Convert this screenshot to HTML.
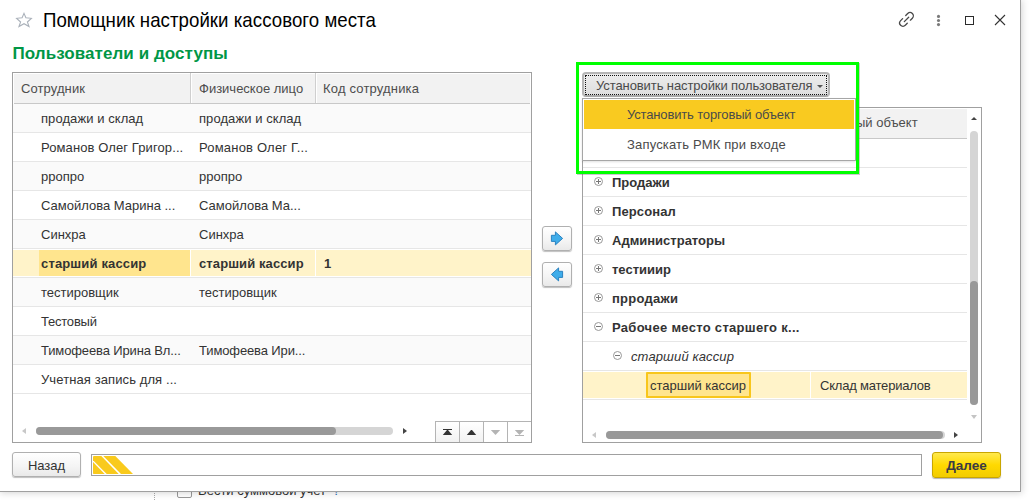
<!DOCTYPE html>
<html lang="ru">
<head>
<meta charset="utf-8">
<title>Помощник настройки кассового места</title>
<style>
*{box-sizing:border-box;margin:0;padding:0}
html,body{width:1032px;height:500px;overflow:hidden;background:#fff}
body{font-family:"Liberation Sans",sans-serif;font-size:13px;color:#333;position:relative}
.abs{position:absolute}
#under{left:0;top:480px;width:1032px;height:20px;background:#fff;overflow:hidden}
#under .dots{left:154px;top:0;width:0;height:20px;border-left:1px dotted #aaa}
#under .cb{left:177px;top:3px;width:15px;height:15px;border:1px solid #999;border-radius:2px;background:#fff}
#under .t{left:198px;top:3px;font-size:13px;line-height:15px;color:#333;white-space:nowrap}
#under .t span{color:#2a6fb5}
#win{left:-1px;top:-1px;width:1022px;height:493px;background:#fff;border:1px solid #a0a0a0;box-shadow:1px 1px 7px rgba(0,0,0,.17)}
#title{left:43px;top:9px;font-size:18.67px;line-height:22px;transform:scaleY(1.06);transform-origin:0 4px;letter-spacing:0.045px;color:#000;white-space:nowrap}
#heading{left:12.500px;top:44px;font-size:17px;line-height:20px;font-weight:bold;color:#009646;white-space:nowrap;letter-spacing:0.070px}
/* left table */
#lt{left:12px;top:72px;width:520px;height:371px;border:1px solid #a0a0a0;background:#fff;overflow:hidden}
#lt .hdr{left:1px;top:1px;width:516px;height:30px;background:#f2f2f2;border-bottom:1px solid #c8c8c8}
#lt .hdr div{position:absolute;top:0;height:30px;line-height:30px;color:#4d4d4d;white-space:nowrap}
.vsep{position:absolute;top:-1px;width:1px;height:30px;background:#cfcfcf}
.row{position:absolute;left:0;width:518px;height:29px;border-bottom:1px solid #e6e6e6;line-height:30px;white-space:nowrap}
.row.alt{background:#fafafa}
.row div{position:absolute;top:0;height:28px}
.c1{left:28px}.c2{left:186px}.c3{left:311px}
.row.sel{background:#fff;font-weight:bold;color:#333}
/* right tree */
#rt{left:582px;top:107px;width:400px;height:336px;border:1px solid #a0a0a0;background:#fff;overflow:hidden}
#rt .hdr{left:1px;top:1px;width:383px;height:30px;background:#f2f2f2;border-bottom:1px solid #c8c8c8}
.trow{position:absolute;left:0;width:384px;height:29px;border-bottom:1px solid #e6e6e6;line-height:30px;white-space:nowrap}
.trow b,.trow i{position:absolute;top:0}
.ic{position:absolute;width:9px;height:9px;border:1px solid #999;border-radius:50%;top:9px}
.ic:before{content:"";position:absolute;left:1px;top:3px;width:5px;height:1px;background:#777}
.ic.p:after{content:"";position:absolute;left:3px;top:1px;width:1px;height:5px;background:#777}
.btn{position:absolute;border:1px solid #b0b0b0;border-radius:3px;background:linear-gradient(#fff,#f4f4f4 60%,#e9e9e9);box-shadow:0 1px 1px rgba(0,0,0,.25)}
</style>
</head>
<body>
<div id="under" class="abs">
  <div class="abs dots"></div>
  <div class="abs cb"></div>
  <div class="abs t">Вести суммовой учет <span style="margin-left:3px">?</span></div>
</div>
<div id="win" class="abs">
  <!-- title bar -->
  <svg class="abs" style="left:14px;top:11px" width="20" height="18" viewBox="0 0 20 18"><path d="M10.0 2.4 L11.9 6.7 L17.4 7.3 L13.4 11.0 L15.0 15.6 L10.0 12.7 L5.0 15.6 L6.6 11.0 L2.6 7.3 L8.1 6.7 Z" fill="none" stroke="#aab1ba" stroke-width="1.100" stroke-linejoin="miter"/></svg>
  <div id="title" class="abs">Помощник настройки кассового места</div>
  <svg class="abs" style="left:896px;top:9px" width="21" height="21" viewBox="-10.500 -10.400 21 21" fill="none" stroke="#484848" stroke-width="1.300" stroke-linecap="round"><g transform="rotate(-45)"><path d="M-2.200 -3.300 H-5 A3.300 3.300 0 0 0 -5 3.300 H-2.200"/><path d="M2.200 -3.300 H5 A3.300 3.300 0 0 1 5 3.300 H2.200"/><path d="M-3.100 0 H3.100"/></g></svg>
  <svg class="abs" style="left:936px;top:14px" width="5" height="13" viewBox="0 0 5 13" fill="#7a7a7a"><circle cx="2.500" cy="2.400" r="1.550"/><circle cx="2.500" cy="6.500" r="1.550"/><circle cx="2.500" cy="10.600" r="1.550"/></svg>
  <div class="abs" style="left:965px;top:16px;width:9px;height:9px;border:1.200px solid #2b2b2b"></div>
  <svg class="abs" style="left:994px;top:14px" width="12" height="12" viewBox="0 0 12 12" stroke="#333" stroke-width="1.100" fill="none"><path d="M1 1 L11 11 M11 1 L1 11"/></svg>

  <div id="heading" class="abs">Пользователи и доступы</div>

  <!-- left table -->
  <div id="lt" class="abs">
    <div class="abs hdr">
      <div style="left:7px;letter-spacing:0.1px">Сотрудник</div>
      <div style="left:185px">Физическое лицо</div>
      <div style="left:309px;letter-spacing:0.18px">Код сотрудника</div>
      <span class="vsep" style="left:176px"></span><span class="vsep" style="left:177px;background:#fff"></span>
      <span class="vsep" style="left:301px"></span><span class="vsep" style="left:302px;background:#fff"></span>
    </div>
    <div class="row alt" style="top:31px"><div class="c1" style="letter-spacing:.07px">продажи и склад</div><div class="c2" style="letter-spacing:.07px">продажи и склад</div></div>
    <div class="row" style="top:60px"><div class="c1" style="letter-spacing:.1px">Романов Олег Григор...</div><div class="c2" style="letter-spacing:.19px">Романов Олег Г...</div></div>
    <div class="row alt" style="top:89px"><div class="c1">рропро</div><div class="c2">рропро</div></div>
    <div class="row" style="top:118px"><div class="c1">Самойлова Марина ...</div><div class="c2">Самойлова Ма...</div></div>
    <div class="row alt" style="top:147px"><div class="c1">Синхра</div><div class="c2">Синхра</div></div>
    <div class="row sel" style="top:176px">
      <span class="abs" style="left:0;top:1px;width:518px;height:26px;background:#fff3c9"></span>
      <span class="abs" style="left:26px;top:1px;width:151px;height:26px;background:#ffe58e"></span>
      <span class="abs" style="left:177px;top:1px;width:1px;height:26px;background:#fff"></span>
      <span class="abs" style="left:302px;top:1px;width:1px;height:26px;background:#fff"></span>
      <div class="c1" style="letter-spacing:.15px">старший кассир</div><div class="c2" style="letter-spacing:.1px">старший кассир</div><div class="c3">1</div></div>
    <div class="row alt" style="top:205px"><div class="c1">тестировщик</div><div class="c2">тестировщик</div></div>
    <div class="row" style="top:234px"><div class="c1" style="letter-spacing:-.22px">Тестовый</div></div>
    <div class="row alt" style="top:263px"><div class="c1" style="letter-spacing:-.13px">Тимофеева Ирина Вл...</div><div class="c2" style="letter-spacing:-.12px">Тимофеева Ири...</div></div>
    <div class="row" style="top:292px"><div class="c1" style="letter-spacing:.1px">Учетная запись для ...</div></div>
    <!-- h scrollbar -->
    <div class="abs" style="left:23px;top:354px;width:357px;height:8px;border-radius:4px;background:#d5d5d5"></div>
    <div class="abs" style="left:23px;top:354px;width:300px;height:8px;border-radius:4px;background:#999"></div>
    <div class="abs" style="left:9px;top:355px;border:3px solid transparent;border-right:4px solid #c8c8c8;border-left:0"></div>
    <div class="abs" style="left:390px;top:355px;border:3px solid transparent;border-left:4px solid #444;border-right:0"></div>
    <!-- nav buttons -->
    <div class="abs" style="left:422px;top:348px;width:97px;height:22px;border-top:1px solid #b4b4b4;border-left:1px solid #b4b4b4;background:#fff">
      <span class="abs" style="left:0;top:0;width:47px;height:21px;background:linear-gradient(#fff,#f1f1f1)"></span>
      <span class="abs" style="left:23px;top:0;width:1px;height:21px;background:#b4b4b4"></span>
      <span class="abs" style="left:47px;top:0;width:1px;height:21px;background:#b4b4b4"></span>
      <span class="abs" style="left:71px;top:0;width:1px;height:21px;background:#b4b4b4"></span>
      <svg class="abs" style="left:0;top:0" width="96" height="21" viewBox="0 0 96 21">
        <path d="M7 7 H16 V8 H7 Z M11 8 H12 L16.200 13 H6.800 Z" fill="#333"/>
        <path d="M35 8 H36 L40.200 13 H30.800 Z" fill="#333"/>
        <path d="M54.800 8 H64.200 L59.500 13 Z" fill="#b4b4b4"/>
        <path d="M78.800 8 H88.200 L83.500 13 Z M79 13 H88 V14 H79 Z" fill="#b4b4b4"/>
      </svg>
    </div>
  </div>

  <!-- move buttons -->
  <div class="btn" style="left:542px;top:226px;width:30px;height:25px"><svg class="abs" style="left:7px;top:3px" width="15" height="17" viewBox="0 0 15 17"><path d="M1.400 5.300 H5.400 V1.900 L12.600 8.400 L5.400 14.900 V11.400 H1.400 Z" fill="#3fadea" stroke="#2a82c0" stroke-width="1" stroke-linejoin="round"/></svg></div>
  <div class="btn" style="left:542px;top:262px;width:30px;height:25px"><svg class="abs" style="left:7px;top:3px" width="15" height="17" viewBox="0 0 15 17"><path d="M12.600 5.300 H8.600 V1.900 L1.400 8.400 L8.600 14.900 V11.400 H12.600 Z" fill="#3fadea" stroke="#2a82c0" stroke-width="1" stroke-linejoin="round"/></svg></div>

  <!-- right tree -->
  <div id="rt" class="abs">
    <div class="abs hdr"><div class="abs" style="left:232px;top:0;line-height:28px;color:#4d4d4d;white-space:nowrap">Торговый объект</div></div>
    <div class="trow" style="top:31px"></div>
    <div class="trow" style="top:60px"><span class="ic p" style="left:11px"></span><b style="left:29px">Продажи</b></div>
    <div class="trow" style="top:89px"><span class="ic p" style="left:11px"></span><b style="left:29px;letter-spacing:0.1px">Персонал</b></div>
    <div class="trow" style="top:118px"><span class="ic p" style="left:11px"></span><b style="left:29px">Администраторы</b></div>
    <div class="trow" style="top:147px"><span class="ic p" style="left:11px"></span><b style="left:29px">тестииир</b></div>
    <div class="trow" style="top:176px"><span class="ic p" style="left:11px"></span><b style="left:29px;letter-spacing:0.25px">прродажи</b></div>
    <div class="trow" style="top:205px"><span class="ic" style="left:11px"></span><b style="left:29px;letter-spacing:0.3px">Рабочее место старшего к...</b></div>
    <div class="trow" style="top:234px"><span class="ic" style="left:30px"></span><i style="left:48px;letter-spacing:0.12px">старший кассир</i></div>
    <div class="trow" style="top:263px">
      <span class="abs" style="left:0;top:1px;width:384px;height:26px;background:#fff3c9"></span>
      <span class="abs" style="left:63px;top:1px;width:105px;height:26px;background:#ffe58e;border:2px solid #f8c61c;border-radius:1px"></span>
      <span class="abs" style="left:227px;top:1px;width:1px;height:26px;background:#fff"></span>
      <span class="abs" style="left:67px;top:0">старший кассир</span>
      <span class="abs" style="left:237px;top:0;letter-spacing:-0.2px">Склад материалов</span>
    </div>
    <!-- v scrollbar -->
    <div class="abs" style="left:387.500px;top:9px;border:3.500px solid transparent;border-bottom:3.500px solid #444;border-top:0"></div>
    <div class="abs" style="left:387px;top:23px;width:8px;height:274px;border-radius:4px;background:#d5d5d5"></div>
    <div class="abs" style="left:387px;top:173px;width:8px;height:124px;border-radius:4px;background:#999"></div>
    <div class="abs" style="left:387.500px;top:307px;border:3.500px solid transparent;border-top:4px solid #c4c4c4;border-bottom:0"></div>
    <!-- h scrollbar -->
    <div class="abs" style="left:9px;top:324px;border:3px solid transparent;border-right:4px solid #c8c8c8;border-left:0"></div>
    <div class="abs" style="left:23px;top:323px;width:339px;height:8px;border-radius:4px;background:#d5d5d5"></div>
    <div class="abs" style="left:23px;top:323px;width:337px;height:8px;border-radius:4px;background:#999"></div>
    <div class="abs" style="left:371px;top:324px;border:3px solid transparent;border-left:4px solid #444;border-right:0"></div>
  </div>

  <!-- dropdown button -->
  <div class="abs" style="left:582px;top:72px;width:248px;height:25px;border:2px solid #b6b6b6;border-bottom-color:#a9a9a9;border-radius:4px;background:linear-gradient(#ededed,#dedede)">
    <span class="abs" style="left:1px;top:1px;width:242px;height:20px;border:1px dotted #111"></span>
    <span class="abs" style="left:12px;top:1px;line-height:21px;color:#4a4a4a;white-space:nowrap;letter-spacing:-0.090px">Установить настройки пользователя</span>
    <span class="abs" style="left:233px;top:11px;border:3.500px solid transparent;border-top:3.500px solid #555;border-bottom:0"></span>
  </div>
  <!-- dropdown menu -->
  <div class="abs" style="left:582px;top:98px;width:274px;height:63px;background:#fff;border:1px solid #a6a6a6;box-shadow:0 1px 2px rgba(0,0,0,.12)">
    <div class="abs" style="left:1px;top:1px;width:270px;height:29px;background:#f9ca20"></div>
    <div class="abs" style="left:44px;top:1px;line-height:29px;color:#4a4a4a;white-space:nowrap;letter-spacing:-0.15px">Установить торговый объект</div>
    <div class="abs" style="left:44px;top:30.500px;line-height:29px;color:#4a4a4a;white-space:nowrap;letter-spacing:0.17px">Запускать РМК при входе</div>
  </div>
  <!-- green highlight -->
  <div class="abs" style="left:576px;top:62px;width:283px;height:112px;border:3px solid #00ff00;box-shadow:1px 1px 0 rgba(120,90,120,.35)"></div>

  <!-- bottom -->
  <div class="btn" style="left:12px;top:452px;width:69px;height:25px;text-align:center;line-height:25px;color:#333">Назад</div>
  <div class="abs" style="left:91px;top:454px;width:831px;height:22px;border:1px solid #a0a0a0;background:#fff;overflow:hidden">
    <svg class="abs" style="left:0;top:0" width="44" height="20" viewBox="0 0 44 20" fill="#f9ca1d"><path d="M1 7 V18.500 L1.500 19 H12.700 Z"/><path d="M1 1.500 L1.500 1 H9.300 L26.700 19 H14.700 L1 5.200 Z"/><path d="M11.300 1 H23.300 L41 19 H29 Z"/></svg>
  </div>
  <div class="abs" style="left:932px;top:452px;width:69px;height:26px;border:1px solid #c9a600;border-radius:3px;background:linear-gradient(#ffe94d,#ffd900 50%,#f2cc00);box-shadow:0 1px 1px rgba(0,0,0,.3);text-align:center;line-height:26px;font-weight:bold;color:#3a3a44;font-size:13.500px">Далее</div>
</div>
</body>
</html>
